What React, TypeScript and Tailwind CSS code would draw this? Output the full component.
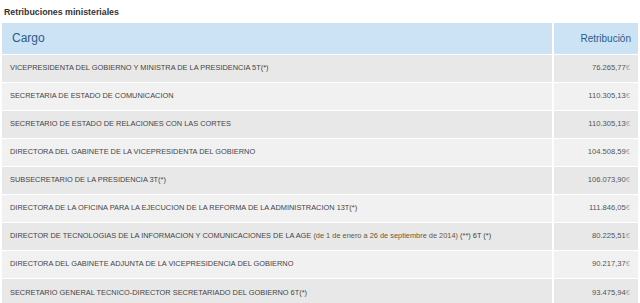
import React from 'react';

type Row = { cargo: string; nota?: string; resto?: string; importe: string };

const rows: Row[] = [
  { cargo: 'VICEPRESIDENTA DEL GOBIERNO Y MINISTRA DE LA PRESIDENCIA 5T(*)', importe: '76.265,77' },
  { cargo: 'SECRETARIA DE ESTADO DE COMUNICACION', importe: '110.305,13' },
  { cargo: 'SECRETARIO DE ESTADO DE RELACIONES CON LAS CORTES', importe: '110.305,13' },
  { cargo: 'DIRECTORA DEL GABINETE DE LA VICEPRESIDENTA DEL GOBIERNO', importe: '104.508,59' },
  { cargo: 'SUBSECRETARIO DE LA PRESIDENCIA 3T(*)', importe: '106.073,90' },
  { cargo: 'DIRECTORA DE LA OFICINA PARA LA EJECUCION DE LA REFORMA DE LA ADMINISTRACION 13T(*)', importe: '111.846,05' },
  {
    cargo: 'DIRECTOR DE TECNOLOGIAS DE LA INFORMACION Y COMUNICACIONES DE LA AGE',
    nota: '(de 1 de enero a 26 de septiembre de 2014)',
    resto: '(**) 6T (*)',
    importe: '80.225,51',
  },
  { cargo: 'DIRECTORA DEL GABINETE ADJUNTA DE LA VICEPRESIDENCIA DEL GOBIERNO', importe: '90.217,37' },
  { cargo: 'SECRETARIO GENERAL TECNICO-DIRECTOR SECRETARIADO DEL GOBIERNO 6T(*)', importe: '93.475,94' },
];

export default function App() {
  return (
    <div className="w-[640px] h-[303px] overflow-hidden bg-white font-['Liberation_Sans',Arial,sans-serif]">
      <h3 className="pl-[4px] pt-[6px] h-[23px] text-[8.8px] font-bold text-[#333] leading-[12px]">
        Retribuciones ministeriales
      </h3>
      <table className="ml-[2px] w-[636px] border-collapse table-fixed">
        <colgroup>
          <col className="w-[551px]" />
          <col />
        </colgroup>
        <thead>
          <tr className="h-[31px] bg-[#cce3f6]">
            <th className="border-r-2 border-white pl-[10px] text-left text-[12px] font-normal text-[#2b5c8c]">Cargo</th>
            <th className="pr-[7px] text-right text-[10px] font-normal text-[#2b5c8c]">Retribución</th>
          </tr>
        </thead>
        <tbody>
          {rows.map((r, i) => (
            <tr
              key={i}
              className={`h-[28px] border-t border-white ${i % 2 === 0 ? 'bg-[#e8e8e8]' : 'bg-[#f1f1f1]'}`}
            >
              <td className="border-r-2 border-white pl-[8px] text-[7.4px] text-[#444] whitespace-nowrap">
                {r.cargo}
                {r.nota && <span className="text-[#6b5638]"> {r.nota}</span>}
                {r.resto && <span> {r.resto}</span>}
              </td>
              <td className="pr-[8px] text-right text-[7.6px] text-[#555] whitespace-nowrap">
                {r.importe}
                <span className="text-[#aaa]">€</span>
              </td>
            </tr>
          ))}
        </tbody>
      </table>
    </div>
  );
}
